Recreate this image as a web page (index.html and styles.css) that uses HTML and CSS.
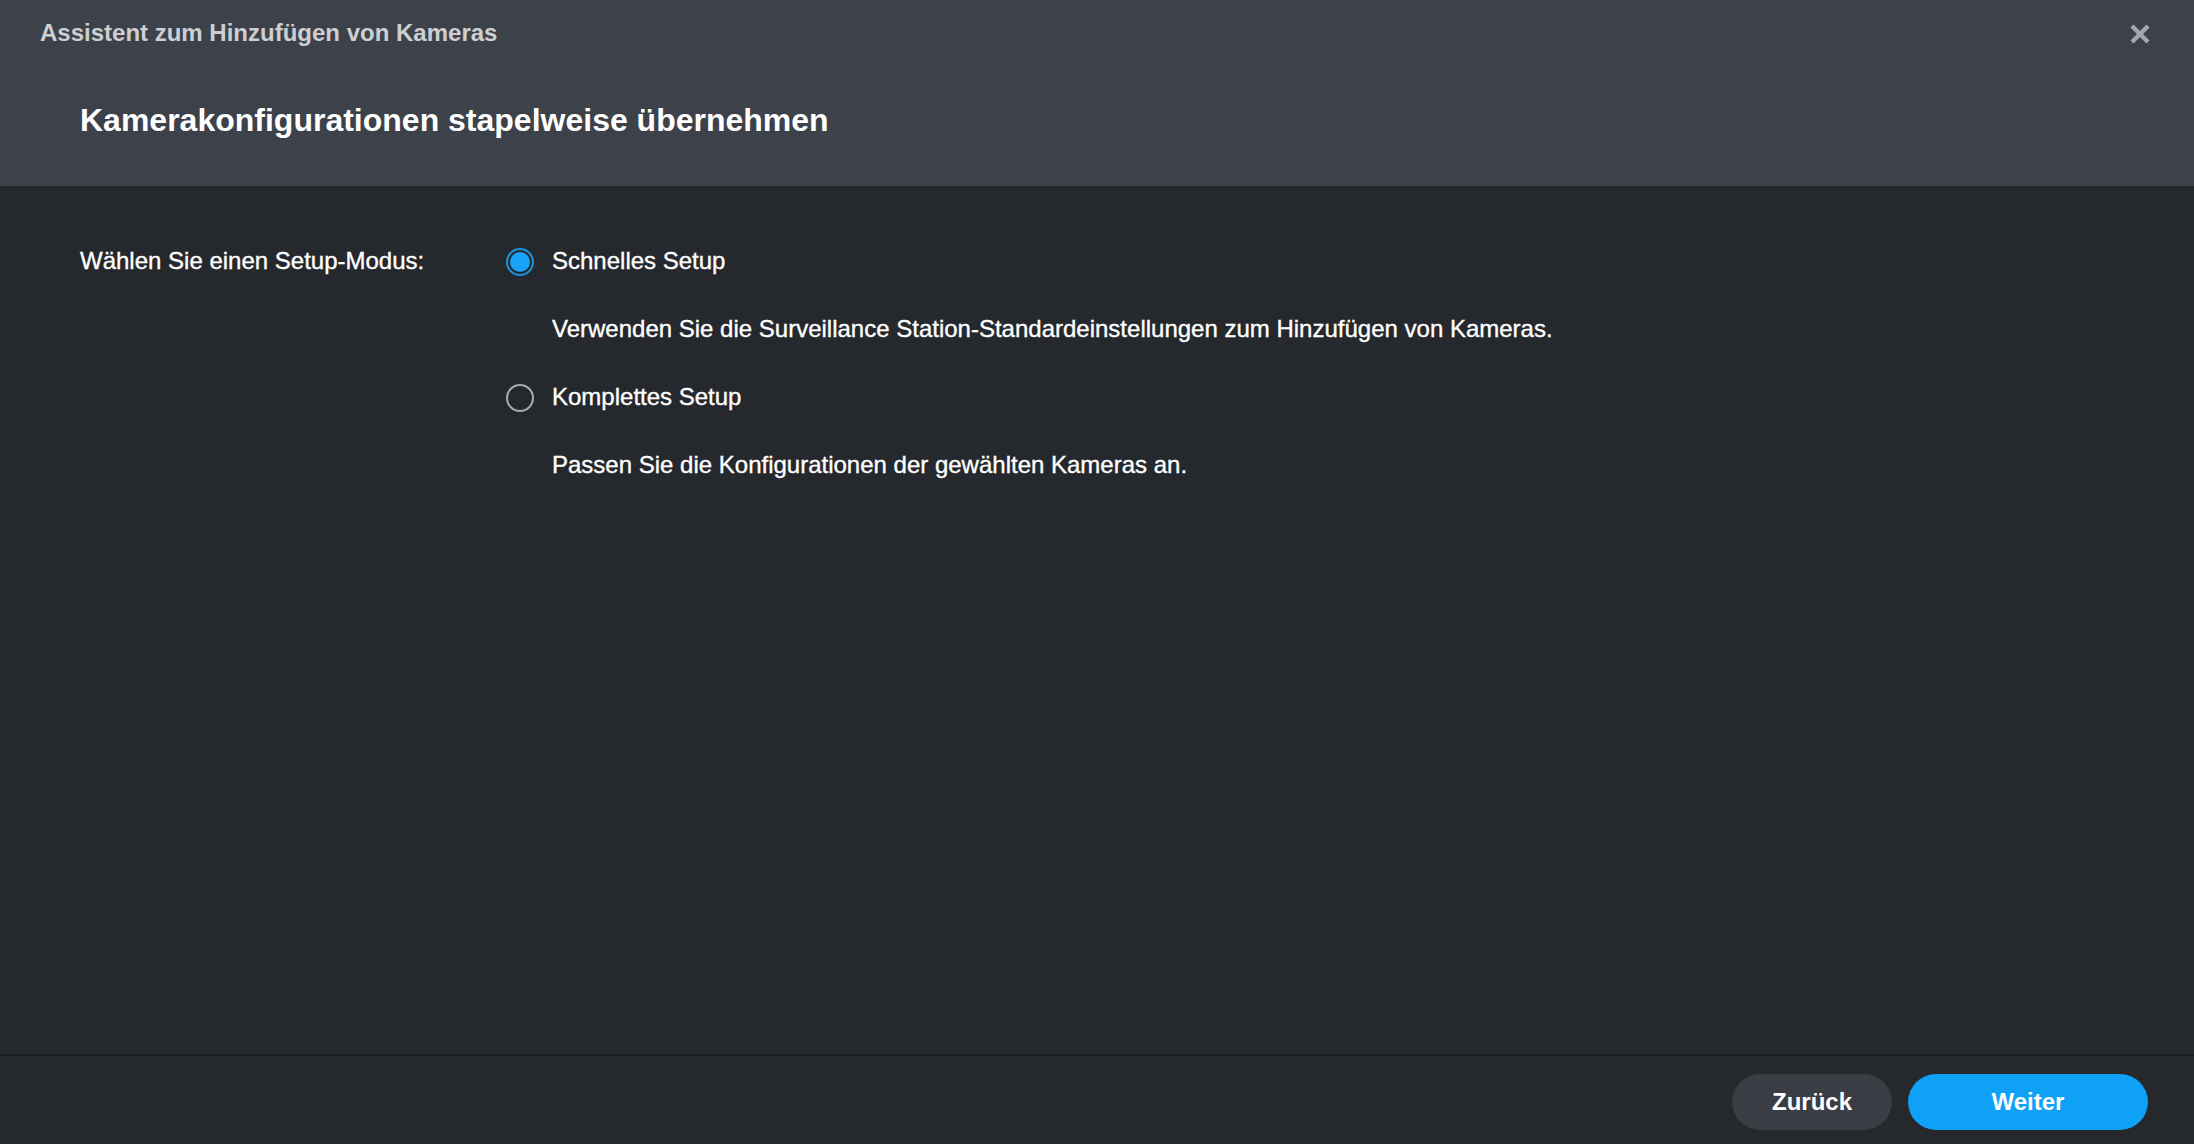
FILE: index.html
```html
<!DOCTYPE html>
<html lang="de">
<head>
<meta charset="utf-8">
<title>Assistent zum Hinzufügen von Kameras</title>
<link rel="stylesheet" href="styles.css">
</head>
<body>
<div class="dialog">
  <header class="dlg-header">
    <div class="dlg-title">Assistent zum Hinzufügen von Kameras</div>
    <h1 class="dlg-subtitle">Kamerakonfigurationen stapelweise übernehmen</h1>
    <button class="close-btn" aria-label="Schließen">
      <svg width="20" height="20" viewBox="0 0 20 20"><path d="M2 2 L18 18 M18 2 L2 18" stroke="#a3a6ab" stroke-width="4.4" stroke-linecap="butt" fill="none"/></svg>
    </button>
  </header>
  <main class="dlg-body">
    <div class="form-grid">
      <div class="field-label">Wählen Sie einen Setup-Modus:</div>
      <div class="options">
        <label class="option">
          <span class="radio checked"><span class="dot"></span></span>
          <span class="opt-text">Schnelles Setup</span>
        </label>
        <div class="opt-desc">Verwenden Sie die Surveillance Station-Standardeinstellungen zum Hinzufügen von Kameras.</div>
        <label class="option">
          <span class="radio"></span>
          <span class="opt-text">Komplettes Setup</span>
        </label>
        <div class="opt-desc">Passen Sie die Konfigurationen der gewählten Kameras an.</div>
      </div>
    </div>
  </main>
  <footer class="dlg-footer">
    <button class="btn btn-back">Zurück</button>
    <button class="btn btn-next">Weiter</button>
  </footer>
</div>
</body>
</html>
```
FILE: styles.css
```css
html, body {
  margin: 0;
  padding: 0;
  height: 100%;
}
body {
  background: #25282d;
  font-family: "Liberation Sans", Arial, Helvetica, sans-serif;
  color: #ffffff;
  -webkit-font-smoothing: antialiased;
}
.dialog {
  display: flex;
  flex-direction: column;
  height: 100vh;
}
.dlg-header {
  position: relative;
  background: #3d424a;
  height: 186px;
  box-sizing: border-box;
  padding: 21px 0 0 40px;
  flex: none;
}
.dlg-title {
  font-size: 24px;
  line-height: 24px;
  font-weight: bold;
  color: #cdcfd2;
}
.dlg-subtitle {
  margin: 59px 0 0 40px;
  font-size: 32px;
  line-height: 32px;
  font-weight: bold;
  color: #ffffff;
}
.close-btn {
  position: absolute;
  top: 24px;
  right: 44px;
  width: 20px;
  height: 20px;
  padding: 0;
  border: 0;
  background: none;
  cursor: pointer;
}
.close-btn svg { display: block; }
.dlg-body {
  flex: 1;
  padding: 63px 0 0 80px;
  border-bottom: 2px solid #1b1d21;
}
.form-grid {
  display: grid;
  grid-template-columns: 426px auto;
}
.field-label,
.opt-text,
.opt-desc {
  font-size: 24px;
  line-height: 24px;
  -webkit-text-stroke: 0.35px #ffffff;
}
.options {
  display: flex;
  flex-direction: column;
  gap: 44px;
}
.option {
  display: flex;
  align-items: center;
  gap: 18px;
  height: 24px;
  cursor: pointer;
}
.radio {
  width: 28px;
  height: 28px;
  box-sizing: border-box;
  border-radius: 50%;
  border: 2px solid #a9abae;
  display: flex;
  align-items: center;
  justify-content: center;
  margin-top: 2px;
  flex: none;
}
.radio.checked {
  border-color: #1b93de;
}
.radio .dot {
  width: 20px;
  height: 20px;
  border-radius: 50%;
  background: #19a3f8;
}
.opt-desc {
  padding-left: 46px;
}
.dlg-footer {
  flex: none;
  height: 88px;
  box-sizing: border-box;
  display: flex;
  justify-content: flex-end;
  gap: 16px;
  padding: 18px 46px 14px 0;
}
.btn {
  height: 56px;
  border: 0;
  border-radius: 28px;
  font-family: "Liberation Sans", Arial, Helvetica, sans-serif;
  font-size: 24px;
  font-weight: bold;
  color: #ffffff;
  cursor: pointer;
  padding: 0;
}
.btn-back {
  width: 160px;
  background: #3a3d43;
}
.btn-next {
  width: 240px;
  background: #0ea1f6;
}
```
